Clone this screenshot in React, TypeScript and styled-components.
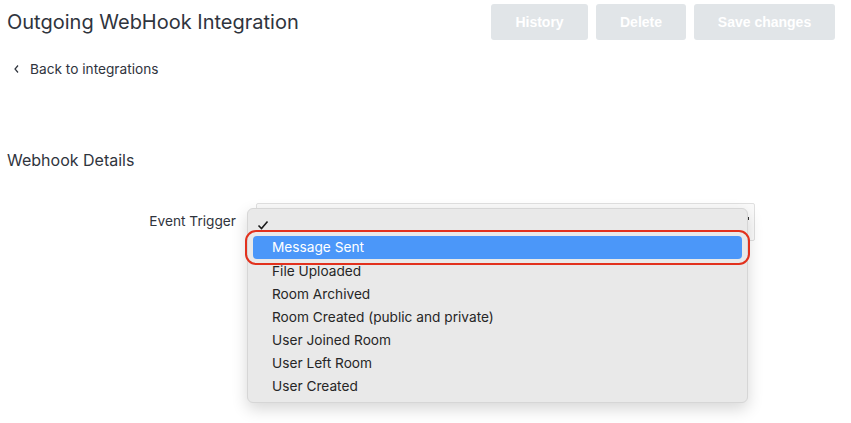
import React from "react";
import styled, { createGlobalStyle } from "styled-components";

const Global = createGlobalStyle`
  html, body { margin: 0; padding: 0; background: #fff; }
  body { font-family: Inter, "Liberation Sans", Arial, sans-serif; color: #2f343d; }
`;

const Page = styled.div`
  width: 851px;
  height: 423px;
  overflow: hidden;
  position: relative;
`;

const Header = styled.header`
  display: flex;
  align-items: center;
  justify-content: space-between;
  height: 44px;
  padding: 0 16px 0 7px;
`;

const Title = styled.h1`
  margin: 0;
  font-size: 20px;
  font-weight: 400;
  color: #2f343d;
`;

const Actions = styled.div`
  display: flex;
  gap: 8px;
`;

const Button = styled.button<{ $w: number }>`
  width: ${(p) => p.$w}px;
  height: 36px;
  border: none;
  border-radius: 3px;
  background: #e1e5e8;
  color: #fff;
  font-family: "Liberation Sans", Arial, sans-serif;
  font-size: 14px;
  font-weight: 700;
  padding: 0;
`;

const BackLink = styled.a`
  display: flex;
  align-items: center;
  gap: 10px;
  margin: 14px 0 0 13px;
  height: 22px;
  font-size: 13.7px;
  color: #2f343d;
  text-decoration: none;
`;

const Section = styled.section`
  padding: 70px 0 0 7px;
`;

const SectionTitle = styled.h2`
  margin: 0;
  font-size: 16px;
  font-weight: 400;
  color: #2f343d;
  line-height: 20px;
`;

const FieldRow = styled.div`
  display: flex;
  align-items: flex-start;
  margin-top: 33px;
`;

const Label = styled.label`
  width: 229px;
  text-align: right;
  font-size: 13.7px;
  line-height: 18px;
  padding-top: 9px;
  color: #2f343d;
`;

const SelectWrap = styled.div`
  position: relative;
  margin-left: 20px;
`;

const SelectBox = styled.div`
  width: 497px;
  height: 36px;
  border: 1px solid #e0e0e0;
  border-radius: 2px;
  background: #fafafa;
  position: relative;
`;

const Caret = styled.span`
  position: absolute;
  right: 5px;
  top: 13px;
  width: 2px;
  height: 3px;
  background: #333;
`;

const Menu = styled.ul`
  position: absolute;
  left: -9px;
  top: 5px;
  width: 501px;
  margin: 0;
  padding: 2px 0 4px;
  list-style: none;
  background: #e9e9e9;
  border: 1px solid #d6d6d6;
  border-radius: 6px;
  box-shadow: 0 6px 16px rgba(0, 0, 0, 0.16);
  box-sizing: border-box;
`;

const CheckRow = styled.li`
  height: 25px;
  display: flex;
  align-items: center;
  padding: 2px 0 0 9px;
  box-sizing: border-box;
`;

const Item = styled.li<{ $active?: boolean }>`
  position: relative;
  height: 23px;
  line-height: 23px;
  margin: 0 5px ${(p) => (p.$active ? "1px" : "0")};
  padding-left: 19px;
  font-size: 13.7px;
  border-radius: 4px;
  color: ${(p) => (p.$active ? "#fff" : "#262626")};
  background: ${(p) => (p.$active ? "#4b97f9" : "transparent")};
`;

const Ring = styled.span`
  position: absolute;
  left: -8px;
  right: -8px;
  top: -6px;
  bottom: -6px;
  border: 2px solid #e2311d;
  border-radius: 11px;
  pointer-events: none;
`;

const items = [
  "File Uploaded",
  "Room Archived",
  "Room Created (public and private)",
  "User Joined Room",
  "User Left Room",
  "User Created",
];

export default function App() {
  return (
    <Page>
      <Global />
      <Header>
        <Title>Outgoing WebHook Integration</Title>
        <Actions>
          <Button $w={97}>History</Button>
          <Button $w={90}>Delete</Button>
          <Button $w={141}>Save changes</Button>
        </Actions>
      </Header>
      <BackLink href="#">
        <svg width="7" height="10" viewBox="0 0 7 10">
          <path d="M5 1.5 L2 5 L5 8.5" fill="none" stroke="#2f343d" strokeWidth="1.2" />
        </svg>
        Back to integrations
      </BackLink>
      <Section>
        <SectionTitle>Webhook Details</SectionTitle>
        <FieldRow>
          <Label>Event Trigger</Label>
          <SelectWrap>
            <SelectBox>
              <Caret />
            </SelectBox>
            <Menu>
              <CheckRow>
                <svg width="12" height="10" viewBox="0 0 12 10">
                  <path d="M1.5 5.5 L4.5 8.5 L10.5 1.5" fill="none" stroke="#1a1a1a" strokeWidth="1.6" />
                </svg>
              </CheckRow>
              <Item $active>
                Message Sent
                <Ring />
              </Item>
              {items.map((t) => (
                <Item key={t}>{t}</Item>
              ))}
            </Menu>
          </SelectWrap>
        </FieldRow>
      </Section>
    </Page>
  );
}
